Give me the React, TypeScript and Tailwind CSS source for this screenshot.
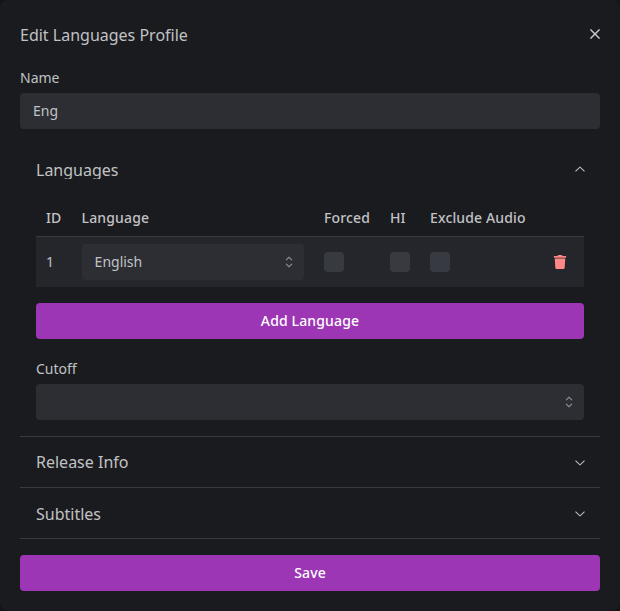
import type { ReactNode } from "react";
import { FaTrash } from "react-icons/fa";

function ChevronDown({ className = "" }: { className?: string }) {
  return (
    <svg viewBox="0 0 15 15" className={`size-4 shrink-0 ${className}`} fill="currentColor">
      <path
        fillRule="evenodd"
        clipRule="evenodd"
        d="M3.13523 6.15803C3.3241 5.95657 3.64052 5.94637 3.84197 6.13523L7.5 9.56464L11.158 6.13523C11.3595 5.94637 11.6759 5.95657 11.8648 6.15803C12.0536 6.35949 12.0434 6.67591 11.842 6.86477L7.84197 10.6148C7.64964 10.7951 7.35036 10.7951 7.15803 10.6148L3.15803 6.86477C2.95657 6.67591 2.94637 6.35949 3.13523 6.15803Z"
      />
    </svg>
  );
}

function CloseIcon() {
  return (
    <svg viewBox="0 0 15 15" className="size-4 text-[#ced4da]" fill="currentColor" stroke="currentColor" strokeWidth="0.25">
      <path
        fillRule="evenodd"
        clipRule="evenodd"
        d="M11.7816 4.03157C12.0062 3.80702 12.0062 3.44295 11.7816 3.2184C11.5571 2.99385 11.193 2.99385 10.9685 3.2184L7.50005 6.68682L4.03164 3.2184C3.80708 2.99385 3.44301 2.99385 3.21846 3.2184C2.99391 3.44295 2.99391 3.80702 3.21846 4.03157L6.68688 7.49999L3.21846 10.9684C2.99391 11.193 2.99391 11.557 3.21846 11.7816C3.44301 12.0061 3.80708 12.0061 4.03164 11.7816L7.50005 8.31316L10.9685 11.7816C11.193 12.0061 11.5571 12.0061 11.7816 11.7816C12.0062 11.557 12.0062 11.193 11.7816 10.9684L8.31322 7.49999L11.7816 4.03157Z"
      />
    </svg>
  );
}

function Selector() {
  return (
    <svg viewBox="0 0 15 15" className="size-[18px] text-[#909296]" fill="currentColor">
      <path
        fillRule="evenodd"
        clipRule="evenodd"
        d="M4.93179 5.43179C4.75605 5.60753 4.75605 5.89245 4.93179 6.06819C5.10753 6.24392 5.39245 6.24392 5.56819 6.06819L7.49999 4.13638L9.43179 6.06819C9.60753 6.24392 9.89245 6.24392 10.0682 6.06819C10.2439 5.89245 10.2439 5.60753 10.0682 5.43179L7.81819 3.18179C7.73379 3.0974 7.61933 3.04999 7.49999 3.04999C7.38064 3.04999 7.26618 3.0974 7.18179 3.18179L4.93179 5.43179ZM10.0682 9.56819C10.2439 9.39245 10.2439 9.10753 10.0682 8.93179C9.89245 8.75606 9.60753 8.75606 9.43179 8.93179L7.49999 10.8636L5.56819 8.93179C5.39245 8.75606 5.10753 8.75606 4.93179 8.93179C4.75605 9.10753 4.75605 9.39245 4.93179 9.56819L7.18179 11.8182C7.35753 11.9939 7.64245 11.9939 7.81819 11.8182L10.0682 9.56819Z"
      />
    </svg>
  );
}

function Select({ value = "" }: { value?: string }) {
  return (
    <div className="flex h-9 w-full items-center justify-between rounded bg-[#2c2e33] pr-1.5 pl-[13px]">
      <span>{value}</span>
      <Selector />
    </div>
  );
}

function Button({ children }: { children: ReactNode }) {
  return (
    <button className="flex h-9 w-full items-center justify-center rounded bg-[#9c36b5] font-medium tracking-[0.14px] text-white">
      {children}
    </button>
  );
}

const columns = "grid grid-cols-[35.6px_242.4px_66px_40px_123px_31px]";

export default function App() {
  return (
    <div className="h-[611px] w-[620px] bg-[#141517] font-['Noto_Sans',sans-serif] text-sm leading-[22px] text-[#c1c2c5]">
      <div className="h-full rounded-lg bg-[#1a1b1e] px-5 pt-5">
        <header className="flex h-[47px] items-start justify-between">
          <h2 className="pt-[3px] text-base leading-6">Edit Languages Profile</h2>
          <button className="flex h-7 w-[10px] items-center justify-center">
            <span className="shrink-0">
              <CloseIcon />
            </span>
          </button>
        </header>
        <label className="block h-[26px]">Name</label>
        <div className="flex h-9 items-center rounded bg-[#2c2e33] px-[13px]">Eng</div>

        <section className="mt-4 border-b border-[#373a40] px-4 pb-4">
          <div className="flex h-[50px] items-center justify-between">
            <h3 className="h-[18px] overflow-hidden text-base leading-[18px]">Languages</h3>
            <ChevronDown className="-mr-1 rotate-180" />
          </div>
          <div className={`${columns} mt-[3px] h-[39px] items-center border-b border-[#373a40] pt-0.5 pl-2.5 font-medium tracking-[0.14px]`}>
            <span>ID</span>
            <span>Language</span>
            <span>Forced</span>
            <span>HI</span>
            <span>Exclude Audio</span>
          </div>
          <div className={`${columns} h-[50px] items-center bg-[#25262b] pl-2.5`}>
            <span>1</span>
            <div className="w-[222.4px]">
              <Select value="English" />
            </div>
            <span className="size-5 rounded bg-[#373a40]" />
            <span className="size-5 rounded bg-[#373a40]" />
            <span className="size-5 rounded bg-[#373a40]" />
            <FaTrash className="size-3.5 text-[#ff8787]" />
          </div>
          <div className="mt-4">
            <Button>Add Language</Button>
          </div>
          <label className="mt-[19px] block h-[26px]">Cutoff</label>
          <Select />
        </section>

        <section className="flex h-[51px] items-center justify-between border-b border-[#373a40] px-4">
          <h3 className="text-base">Release Info</h3>
          <ChevronDown className="-mr-1" />
        </section>
        <section className="flex h-[51px] items-center justify-between border-b border-[#373a40] px-4">
          <h3 className="pt-0.5 text-base leading-[22px]">Subtitles</h3>
          <ChevronDown className="-mr-1" />
        </section>
        <div className="mt-4">
          <Button>Save</Button>
        </div>
      </div>
    </div>
  );
}
